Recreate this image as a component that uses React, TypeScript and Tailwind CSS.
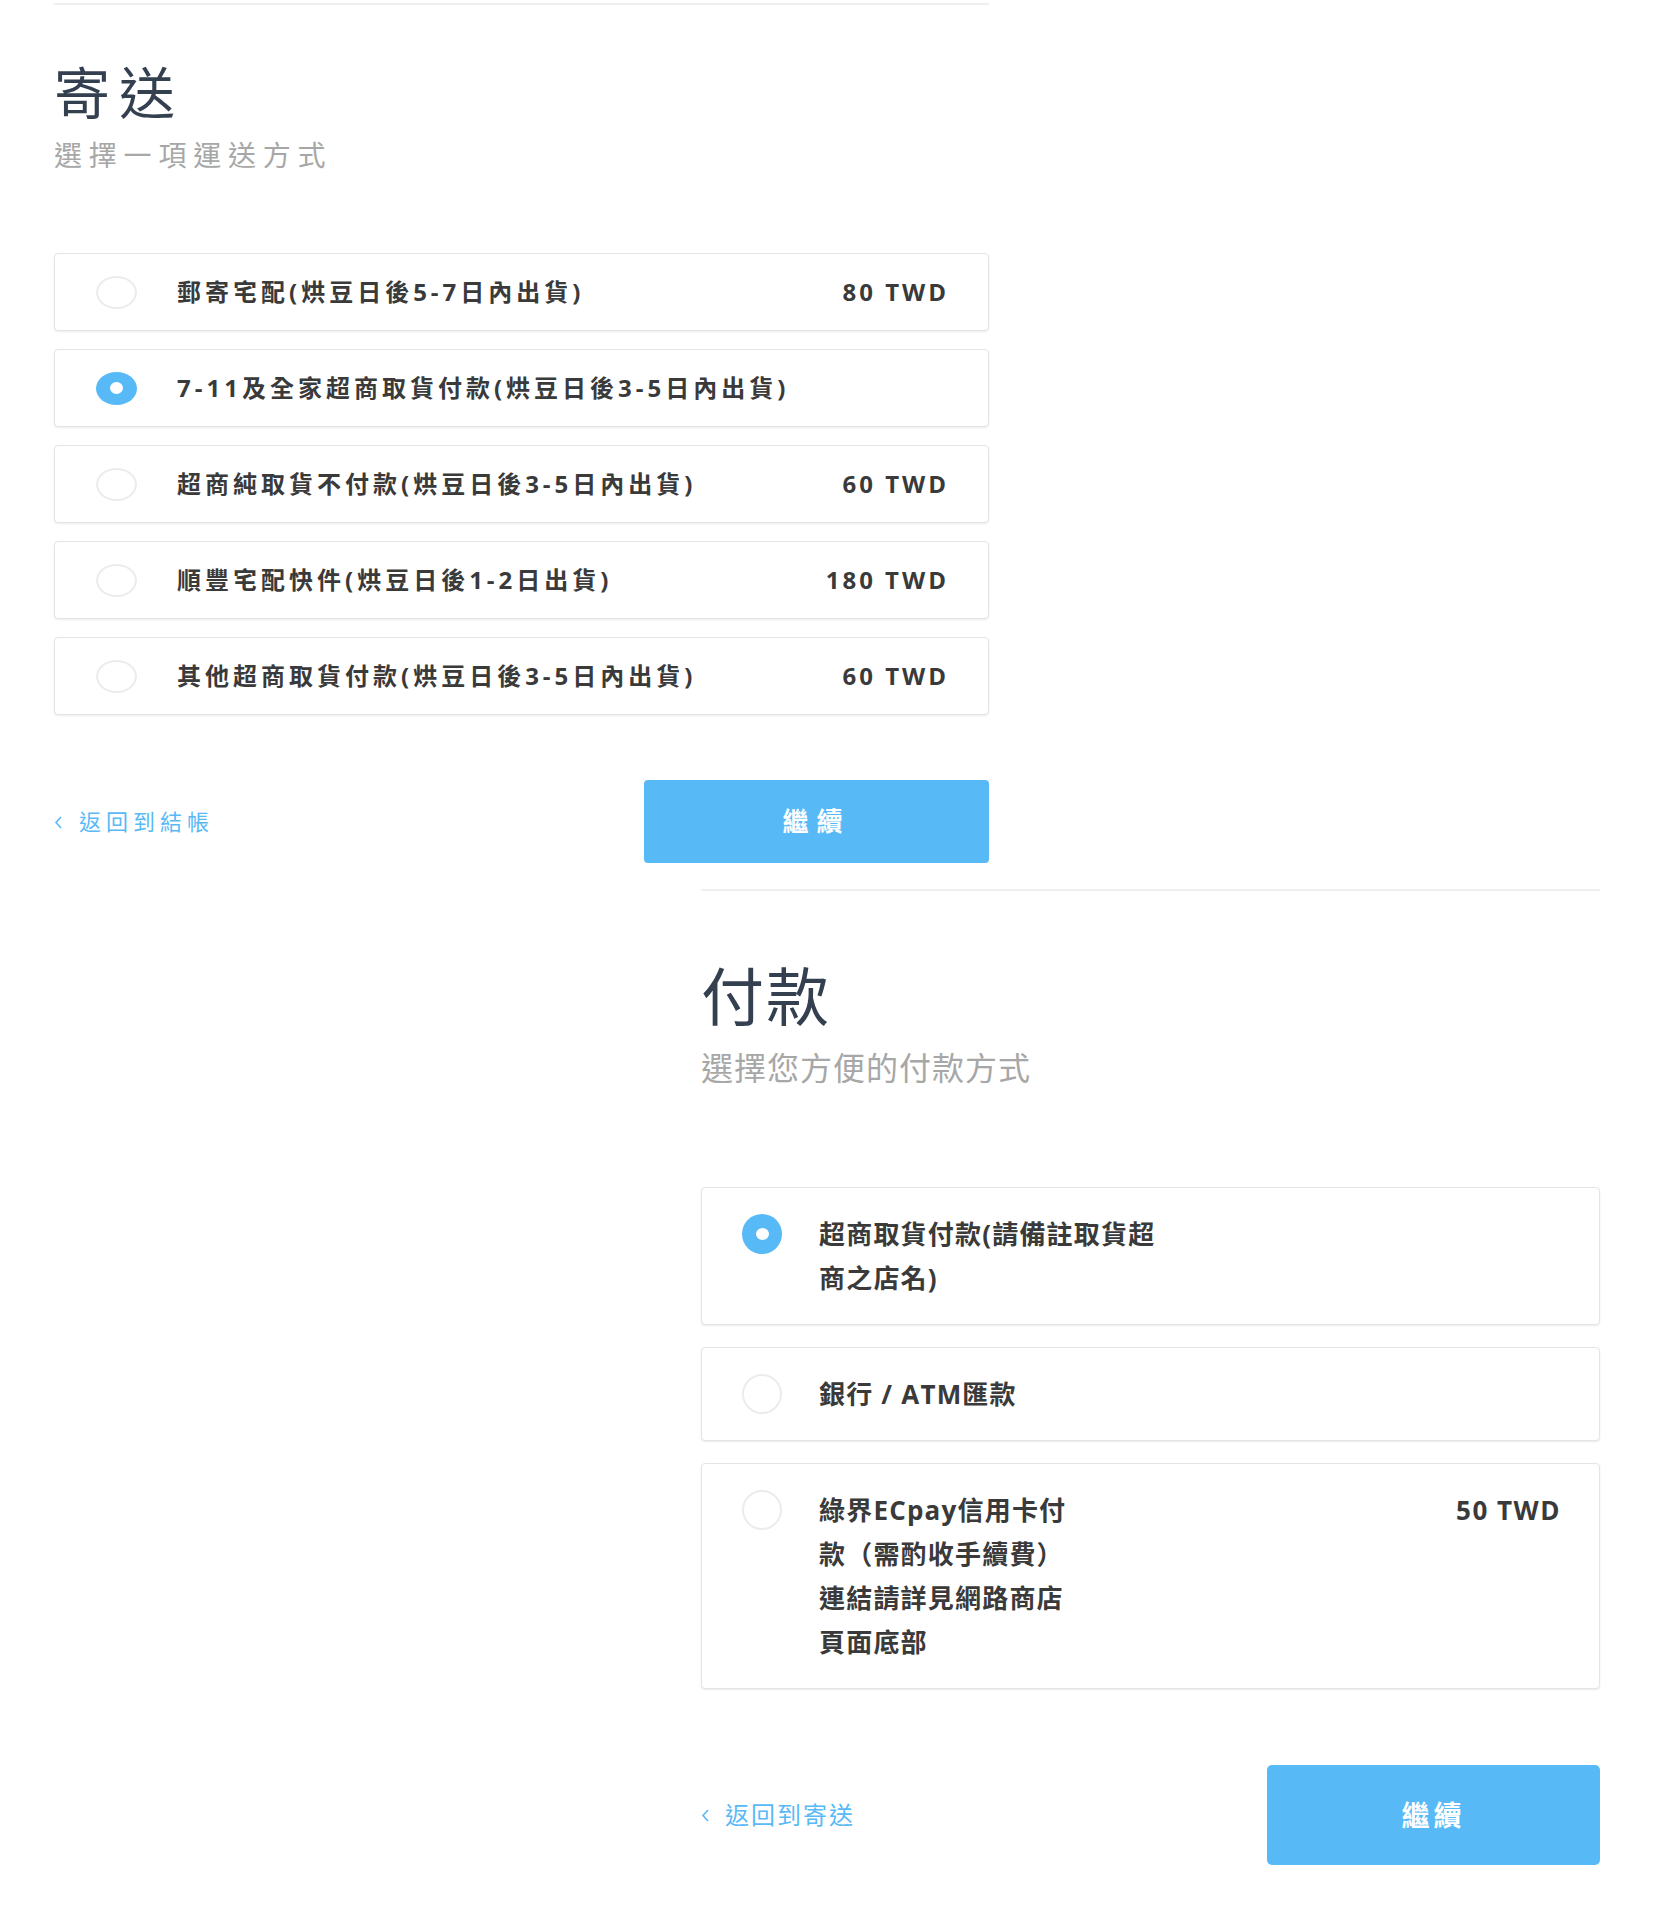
import { ReactNode } from "react";

type Shipping = { label: string; price?: string; selected?: boolean };

const shippingOptions: Shipping[] = [
  { label: "郵寄宅配(烘豆日後5-7日內出貨)", price: "80 TWD" },
  { label: "7-11及全家超商取貨付款(烘豆日後3-5日內出貨)", selected: true },
  { label: "超商純取貨不付款(烘豆日後3-5日內出貨)", price: "60 TWD" },
  { label: "順豐宅配快件(烘豆日後1-2日出貨)", price: "180 TWD" },
  { label: "其他超商取貨付款(烘豆日後3-5日內出貨)", price: "60 TWD" },
];

type Payment = { lines: string[]; price?: string; selected?: boolean };

const paymentOptions: Payment[] = [
  { lines: ["超商取貨付款(請備註取貨超", "商之店名)"], selected: true },
  { lines: ["銀行 / ATM匯款"] },
  {
    lines: ["綠界ECpay信用卡付", "款（需酌收手續費）", "連結請詳見網路商店", "頁面底部"],
    price: "50 TWD",
  },
];

const Chevron = () => (
  <svg width="9" height="14" viewBox="0 0 9 14" fill="none">
    <path d="M7 2L2 7.5L7 13" stroke="#58b9f7" strokeWidth="1.6" />
  </svg>
);

const Radio = ({ selected, className }: { selected?: boolean; className: string }) => (
  <div
    className={
      selected
        ? `flex shrink-0 items-center justify-center rounded-[50%] bg-[#58b9f7] ${className}`
        : `shrink-0 rounded-[50%] border-2 border-[#ececec] bg-white ${className}`
    }
  >
    {selected && <div className="h-[12px] w-[13px] rounded-[50%] bg-white"></div>}
  </div>
);

const Card = ({ children, className }: { children: ReactNode; className: string }) => (
  <div
    className={`flex rounded-[4px] border border-[#e4e4e4] bg-white shadow-[0_1px_2px_rgba(0,0,0,0.08)] ${className}`}
  >
    {children}
  </div>
);

export default function App() {
  return (
    <div className="min-h-[1920px] w-[1676px] bg-white font-['Open_Sans','Noto_Sans_CJK_TC',sans-serif] text-[#333]">
      {/* 寄送 區塊 */}
      <section className="ml-[54px] w-[935px]">
        <div className="mt-[3px] h-[2px] bg-[#efefef]"></div>
        <h2 className="mt-[59px] text-[56px] font-normal leading-none tracking-[9px] text-[#34404f]">
          寄送
        </h2>
        <p className="mt-[21px] text-[28px] leading-none tracking-[6.8px] text-[#a7a7a7]">
          選擇一項運送方式
        </p>

        <div className="mt-[84px] flex flex-col gap-[18px]">
          {shippingOptions.map((opt) => (
            <Card key={opt.label} className="h-[78px] items-center pl-[41px] pr-[39px]">
              <Radio selected={opt.selected} className="h-[33px] w-[41px]" />
              <p className="ml-[40px] flex-1 text-[24px] font-bold tracking-[4px] text-[#3a3a3a]">
                {opt.label}
              </p>
              {opt.price && (
                <p className="text-[24px] font-bold tracking-[3px] text-[#3a3a3a]">{opt.price}</p>
              )}
            </Card>
          ))}
        </div>

        {/* 返回 / 繼續 */}
        <div className="mt-[65px] flex items-center justify-between">
          <a className="flex items-center gap-[16px] text-[22px] tracking-[5px] text-[#58b9f7]">
            <Chevron />
            返回到結帳
          </a>
          <button className="h-[83px] w-[345px] rounded-[4px] bg-[#58b9f7] text-[26px] font-bold tracking-[8px] text-white">
            繼續
          </button>
        </div>
      </section>

      {/* 付款 區塊 */}
      <section className="ml-[701px] mt-[26px] w-[899px] pb-[54px]">
        <div className="h-[2px] bg-[#efefef]"></div>
        <h2 className="mt-[73px] text-[63px] font-normal leading-none tracking-[2px] text-[#34404f]">
          付款
        </h2>
        <p className="mt-[25px] text-[32px] leading-none tracking-[1px] text-[#a7a7a7]">
          選擇您方便的付款方式
        </p>

        <div className="mt-[103px] flex flex-col gap-[22px]">
          {paymentOptions.map((opt) => (
            <Card key={opt.lines[0]} className="items-start py-[24px] pl-[40px] pr-[38px]">
              <Radio selected={opt.selected} className="mt-[2px] h-[40px] w-[40px]" />
              <div className="ml-[37px] flex-1 text-[26px] font-bold leading-[44px] tracking-[1.2px] text-[#3a3a3a]">
                {opt.lines.map((line) => (
                  <p key={line} className="whitespace-nowrap">
                    {line}
                  </p>
                ))}
              </div>
              {opt.price && (
                <p className="text-[26px] font-bold leading-[44px] tracking-[1.5px] text-[#3a3a3a]">
                  {opt.price}
                </p>
              )}
            </Card>
          ))}
        </div>

        <div className="mt-[76px] flex items-center justify-between">
          <a className="flex items-center gap-[15px] text-[24px] tracking-[2px] text-[#58b9f7]">
            <Chevron />
            返回到寄送
          </a>
          <button className="h-[100px] w-[333px] rounded-[5px] bg-[#58b9f7] text-[28px] font-bold tracking-[4px] text-white">
            繼續
          </button>
        </div>
      </section>
    </div>
  );
}
